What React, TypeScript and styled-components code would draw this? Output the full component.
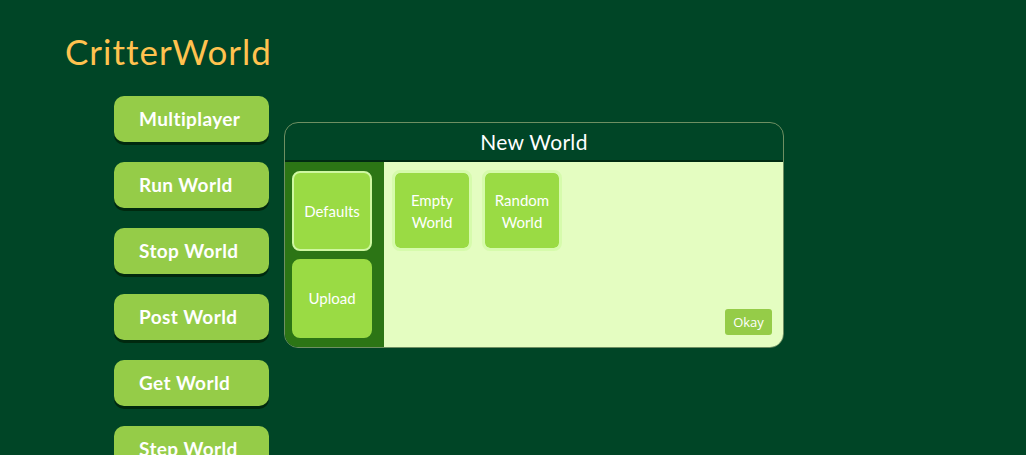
import React from "react";
import styled, { createGlobalStyle } from "styled-components";

const FONT = `"Trebuchet MS", "Lato", "Open Sans", sans-serif`;

const GlobalStyle = createGlobalStyle`
  html, body {
    margin: 0;
    padding: 0;
    background: #004526;
    font-family: ${FONT};
  }
  body { min-height: 455px; overflow: hidden; }
`;

const Page = styled.div`
  width: 1026px;
  height: 455px;
  background: #004526;
  overflow: hidden;
`;

const Title = styled.h1`
  margin: 0;
  padding: 31px 0 0 65px;
  height: 65px;
  box-sizing: border-box;
  font-size: 35px;
  line-height: 40px;
  letter-spacing: 1px;
  font-weight: normal;
  color: #ffc24f;
`;

const Main = styled.div`
  display: flex;
  align-items: flex-start;
  padding: 31px 0 0 114px;
`;

const Nav = styled.nav`
  display: flex;
  flex-direction: column;
  gap: 20px;
`;

const NavButton = styled.button`
  width: 155px;
  height: 46px;
  border: none;
  border-radius: 10px;
  background: #95cc48;
  box-shadow: 0 3px 0 #00290f;
  color: #ffffff;
  font-family: ${FONT};
  font-size: 19px;
  font-weight: bold;
  letter-spacing: 0.4px;
  text-align: left;
  padding: 0 0 2px 25px;
  cursor: pointer;
`;

const Dialog = styled.section`
  margin: 26px 0 0 15px;
  width: 500px;
  height: 226px;
  box-sizing: border-box;
  border: 1px solid #6e8f62;
  border-radius: 14px;
  overflow: hidden;
  display: flex;
  flex-direction: column;
  background: #004526;
`;

const DialogHeader = styled.header`
  height: 37px;
  border-bottom: 2px solid #002b12;
  display: flex;
  align-items: center;
  justify-content: center;
  color: #ffffff;
  font-size: 21px;
  letter-spacing: 0.3px;
`;

const DialogBody = styled.div`
  flex: 1;
  display: flex;
  min-height: 0;
`;

const Sidebar = styled.div`
  width: 99px;
  box-sizing: border-box;
  background: #2c7515;
  padding: 9px 7px;
  display: flex;
  flex-direction: column;
  gap: 8px;
`;

const TabButton = styled.button<{ $active?: boolean }>`
  width: 80px;
  height: 80px;
  box-sizing: border-box;
  border: 2px solid ${(p) => (p.$active ? "#cff7a0" : "#9adb44")};
  border-radius: 8px;
  background: #9adb44;
  color: #ffffff;
  font-family: ${FONT};
  font-size: 15px;
  padding: 0;
  cursor: pointer;
`;

const Content = styled.div`
  flex: 1;
  position: relative;
  background: #e4fdc1;
  padding: 8px;
  display: flex;
  align-items: flex-start;
  gap: 10px;
`;

const OptionButton = styled.button`
  width: 80px;
  height: 81px;
  box-sizing: border-box;
  border: 3px solid #d6fbac;
  border-radius: 8px;
  background: #9adb44;
  background-clip: padding-box;
  color: #ffffff;
  font-family: ${FONT};
  font-size: 15px;
  line-height: 22px;
  padding: 0;
  cursor: pointer;
`;

const OkayButton = styled.button`
  position: absolute;
  right: 11px;
  bottom: 12px;
  width: 47px;
  height: 26px;
  border: none;
  border-radius: 3px;
  background: #95cc48;
  color: #ffffff;
  font-family: "Open Sans", "Liberation Sans", sans-serif;
  font-size: 13px;
  padding: 0;
  cursor: pointer;
`;

const navItems = [
  "Multiplayer",
  "Run World",
  "Stop World",
  "Post World",
  "Get World",
  "Step World",
];

export default function App() {
  return (
    <Page>
      <GlobalStyle />
      <Title>CritterWorld</Title>
      <Main>
        <Nav>
          {navItems.map((n) => (
            <NavButton key={n}>{n}</NavButton>
          ))}
        </Nav>
        <Dialog>
          <DialogHeader>New World</DialogHeader>
          <DialogBody>
            <Sidebar>
              <TabButton $active>Defaults</TabButton>
              <TabButton>Upload</TabButton>
            </Sidebar>
            <Content>
              <OptionButton>
                Empty
                <br />
                World
              </OptionButton>
              <OptionButton>
                Random
                <br />
                World
              </OptionButton>
              <OkayButton>Okay</OkayButton>
            </Content>
          </DialogBody>
        </Dialog>
      </Main>
    </Page>
  );
}
